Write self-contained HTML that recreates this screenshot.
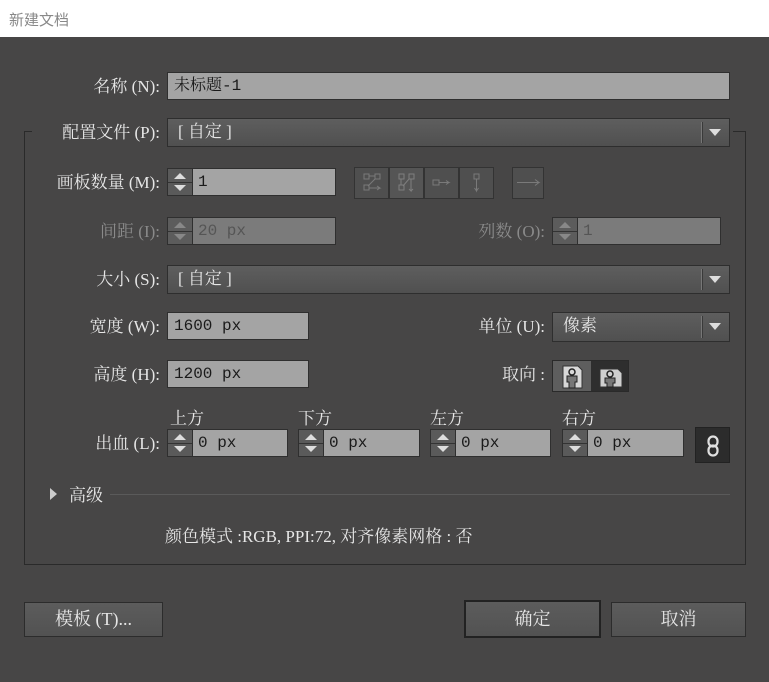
<!DOCTYPE html>
<html><head><meta charset="utf-8"><style>
*{box-sizing:border-box;margin:0;padding:0}
body{width:769px;height:682px;background:#474646;font-family:"Liberation Serif","Noto Serif CJK SC",serif;font-size:17px;color:#e6e6e6;position:relative;overflow:hidden}
.a{position:absolute}
.title{left:0;top:0;width:769px;height:37px;background:#fff;color:#888;font-family:"Liberation Sans","Noto Sans CJK SC",sans-serif;font-size:15px;padding:9px 0 0 9px}
.lbl{position:absolute;white-space:nowrap;line-height:20px;text-align:right;margin-top:1px}
.dis{color:#8a8a8a}
.m{font-family:"Liberation Mono","Noto Serif CJK SC",monospace;font-size:16px}
.fld{position:absolute;background:#a4a4a4;border:1px solid #2f2f2f;color:#1a1a1a;line-height:26px;padding-left:6px;white-space:nowrap}
.fld.d{background:#7b7b7b;color:#555}
.dd{position:absolute;background:linear-gradient(#5e5e5e,#505050);border:1px solid #2e2e2e;color:#e6e6e6;line-height:26px;padding-left:10px}
.dd:after{content:"";position:absolute;right:8px;top:10px;border-left:6px solid transparent;border-right:6px solid transparent;border-top:7px solid #ddd}
.dd:before{content:"";position:absolute;right:26px;top:3px;bottom:3px;width:1px;background:#777;border-right:1px solid #3a3a3a}
.sp{position:absolute;background:#a4a4a4;border:1px solid #2f2f2f;color:#1a1a1a;line-height:26px;padding-left:30px;white-space:nowrap}
.sp .b{position:absolute;left:0;top:0;width:25px;height:100%;background:#5a5a5a;border-right:1px solid #2f2f2f}
.sp .b:before{content:"";position:absolute;left:6px;top:4px;border-left:6px solid transparent;border-right:6px solid transparent;border-bottom:6px solid #ddd}
.sp .b:after{content:"";position:absolute;left:6px;bottom:4px;border-left:6px solid transparent;border-right:6px solid transparent;border-top:6px solid #ddd}
.sp .b i{position:absolute;left:0;right:0;top:50%;height:1px;background:#333}
.sp.d{background:#7b7b7b;color:#555}
.sp.d .b{background:#5c5c5c}.sp.d .b:before{border-bottom-color:#888}.sp.d .b:after{border-top-color:#888}
.btn{position:absolute;background:linear-gradient(#5c5c5c,#525252);border:1px solid #2c2c2c;color:#e6e6e6;text-align:center;line-height:32px;font-size:18px}
.ib{position:absolute;top:167px;height:32px;background:#4f4f4f;border:1px solid #333}
</style></head><body>
<div class="a title">新建文档</div>
<div class="a" style="left:24px;top:131px;width:722px;height:434px;border:1px solid #2a2a2a;border-top:none"></div>
<div class="a" style="left:24px;top:131px;width:8px;height:1px;background:#2a2a2a"></div>
<div class="a" style="left:733px;top:131px;width:13px;height:1px;background:#2a2a2a"></div>

<div class="lbl" style="left:60px;top:76px;width:100px">名称 (N):</div>
<div class="fld m" style="left:167px;top:72px;width:563px;height:28px">未标题-1</div>

<div class="lbl" style="left:35px;top:122px;width:125px;background:#474646">配置文件 (P):</div>
<div class="dd" style="left:167px;top:118px;width:563px;height:29px">[ 自定 ]</div>

<div class="lbl" style="left:35px;top:172px;width:125px">画板数量 (M):</div>
<div class="sp m" style="left:167px;top:168px;width:169px;height:28px"><div class="b"><i></i></div>1</div>
<div class="ib" style="left:354px;width:35px"><svg width="33" height="30" viewBox="0 0 33 30" stroke="#7a7a7a" fill="none"><rect x="9" y="6" width="5" height="5"/><rect x="20" y="6" width="5" height="5"/><rect x="9" y="17" width="5" height="5"/><path d="M14 8h6M20 11L13 18M14 20h11l-3-2M25 20l-3 2"/></svg></div>
<div class="ib" style="left:389px;width:35px;background:#555"><svg width="33" height="30" viewBox="0 0 33 30" stroke="#7e7e7e" fill="none"><rect x="9" y="6" width="5" height="5"/><rect x="19" y="6" width="5" height="5"/><rect x="9" y="17" width="5" height="5"/><path d="M11 11v6M19 11l-6 7M21 11v12l-2-2M21 23l2-2"/></svg></div>
<div class="ib" style="left:424px;width:35px"><svg width="33" height="30" viewBox="0 0 33 30" stroke="#7a7a7a" fill="none"><rect x="8" y="12" width="6" height="5"/><path d="M14 14.5h10l-3-2M24 14.5l-3 2"/></svg></div>
<div class="ib" style="left:459px;width:35px"><svg width="33" height="30" viewBox="0 0 33 30" stroke="#7a7a7a" fill="none"><rect x="14" y="6" width="5" height="5"/><path d="M16.5 11v12l-2-3M16.5 23l2-3"/></svg></div>
<div class="ib" style="left:512px;width:32px"><svg width="30" height="30" viewBox="0 0 30 30" stroke="#7a7a7a" fill="none"><path d="M4 14.5h22l-4-3M26 14.5l-4 3"/></svg></div>

<div class="lbl dis" style="left:35px;top:221px;width:125px">间距 (I):</div>
<div class="sp d m" style="left:167px;top:217px;width:169px;height:28px"><div class="b"><i></i></div>20 px</div>
<div class="lbl dis" style="left:420px;top:221px;width:125px">列数 (O):</div>
<div class="sp d m" style="left:552px;top:217px;width:169px;height:28px"><div class="b"><i></i></div>1</div>

<div class="lbl" style="left:35px;top:269px;width:125px">大小 (S):</div>
<div class="dd" style="left:167px;top:265px;width:563px;height:29px">[ 自定 ]</div>

<div class="lbl" style="left:35px;top:316px;width:125px">宽度 (W):</div>
<div class="fld m" style="left:167px;top:312px;width:142px;height:28px">1600 px</div>
<div class="lbl" style="left:420px;top:316px;width:125px">单位 (U):</div>
<div class="dd" style="left:552px;top:312px;width:178px;height:30px">像素</div>

<div class="lbl" style="left:35px;top:364px;width:125px">高度 (H):</div>
<div class="fld m" style="left:167px;top:360px;width:142px;height:28px">1200 px</div>
<div class="lbl" style="left:420px;top:364px;width:125px">取向 :</div>
<div class="a" style="left:552px;top:360px;width:77px;height:32px;border:1px solid #2a2a2a;background:#2e2e2e">
<div class="a" style="left:0;top:0;width:38px;height:30px;background:#5e5e5e"></div>
<svg class="a" style="left:8px;top:3px" width="24" height="26" viewBox="0 0 24 26"><path d="M2 2h15l4 4v18H2z" fill="#d8d8d8" stroke="#333"/><circle cx="11" cy="8" r="3" fill="none" stroke="#222" stroke-width="1.5"/><path d="M6 12h10v6h-2v6h-6v-6H6z" fill="#777" stroke="#222"/></svg>
<svg class="a" style="left:45px;top:4px" width="26" height="24" viewBox="0 0 26 24"><path d="M2 4h18l4 4v14H2z" fill="#cfcfcf" stroke="#333"/><circle cx="12" cy="9" r="3" fill="none" stroke="#222" stroke-width="1.5"/><path d="M7 13h10v5h-2v4H9v-4H7z" fill="#777" stroke="#222"/></svg>
</div>

<div class="lbl" style="left:170px;top:408px">上方</div>
<div class="lbl" style="left:298px;top:408px">下方</div>
<div class="lbl" style="left:430px;top:408px">左方</div>
<div class="lbl" style="left:562px;top:408px">右方</div>
<div class="lbl" style="left:35px;top:433px;width:125px">出血 (L):</div>
<div class="sp m" style="left:167px;top:429px;width:121px;height:28px"><div class="b"><i></i></div>0 px</div>
<div class="sp m" style="left:298px;top:429px;width:122px;height:28px"><div class="b"><i></i></div>0 px</div>
<div class="sp m" style="left:430px;top:429px;width:121px;height:28px"><div class="b"><i></i></div>0 px</div>
<div class="sp m" style="left:562px;top:429px;width:122px;height:28px"><div class="b"><i></i></div>0 px</div>
<div class="a" style="left:695px;top:427px;width:35px;height:36px;background:#2c2c2c;border:1px solid #222"><svg class="a" style="left:10px;top:7px" width="14" height="22" viewBox="0 0 14 22" fill="none" stroke="#e0e0e0" stroke-width="2.2"><rect x="2.5" y="1.5" width="9" height="10" rx="4.5"/><rect x="2.5" y="10.5" width="9" height="10" rx="4.5"/></svg></div>

<div class="a" style="left:50px;top:488px;border-top:6px solid transparent;border-bottom:6px solid transparent;border-left:7px solid #ccc"></div>
<div class="lbl" style="left:69px;top:485px">高级</div>
<div class="a" style="left:110px;top:494px;width:620px;height:1px;background:#5a5a5a"></div>

<div class="lbl" style="left:165px;top:526px">颜色模式 :RGB, PPI:72, 对齐像素网格 : 否</div>

<div class="btn" style="left:24px;top:602px;width:139px;height:35px">模板 (T)...</div>
<div class="btn" style="left:464px;top:600px;width:137px;height:38px;border:2px solid #222;line-height:34px">确定</div>
<div class="btn" style="left:611px;top:602px;width:135px;height:35px">取消</div>
</body></html>
